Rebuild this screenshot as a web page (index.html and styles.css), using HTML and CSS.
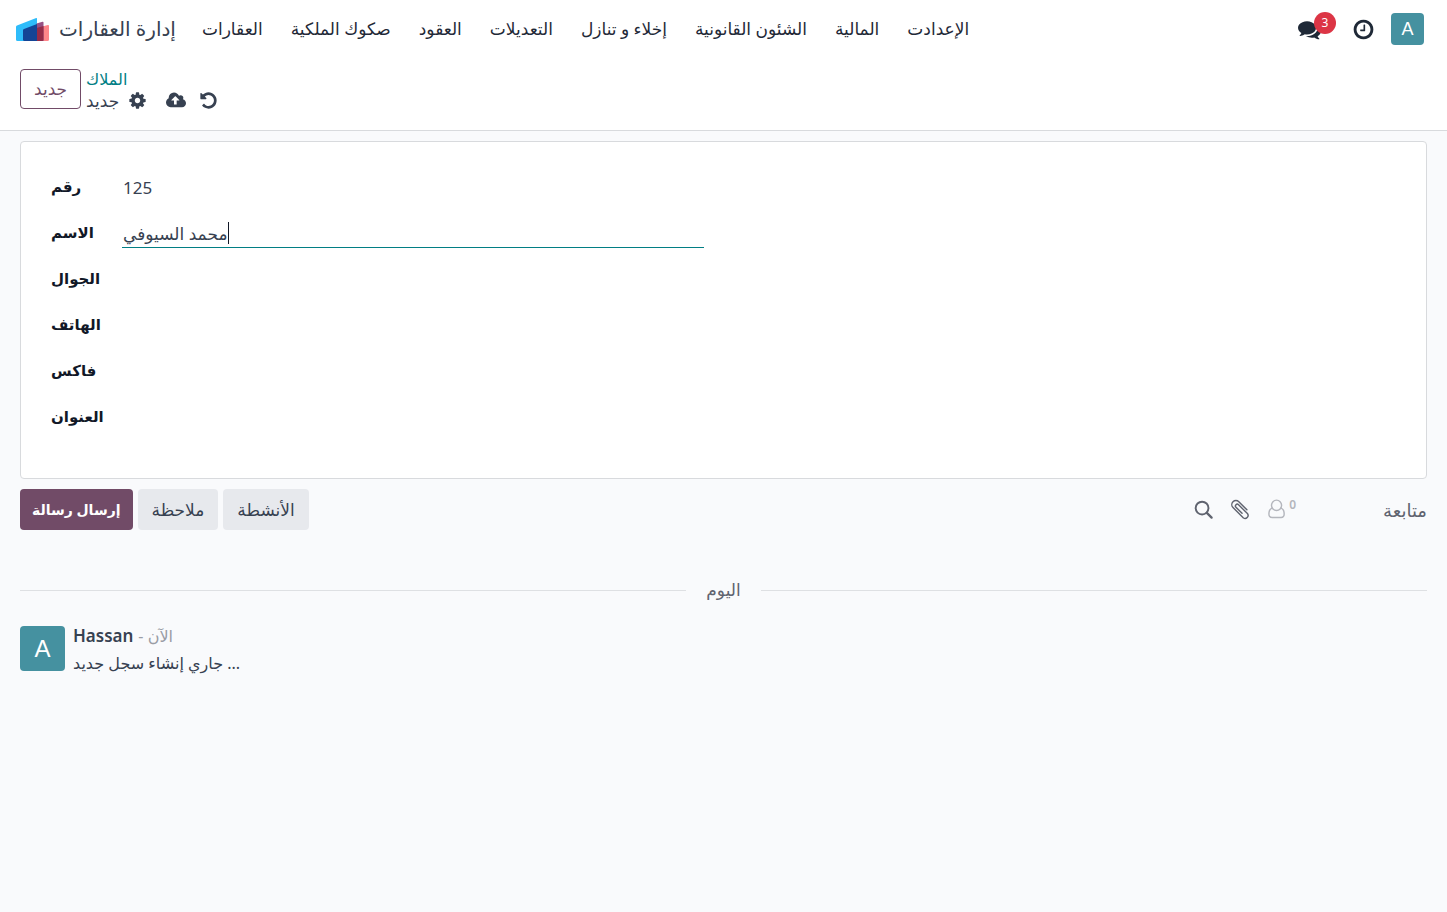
FILE: index.html
```html
<!DOCTYPE html>
<html lang="ar" dir="ltr">
<head>
<meta charset="utf-8">
<title>إدارة العقارات</title>
<link rel="stylesheet" href="styles.css">
</head>
<body>
<header class="navbar">
  <a class="brand" href="#">
    <svg class="brand-logo" viewBox="0 0 34 24" aria-hidden="true">
      <path fill="#2ebcfa" d="M2 8.500Q1 8.900 1 10V22.500Q1 24 2.500 24H22V1.500Q22 .7 21.200 1z"/>
      <path fill="#ff868a" d="M22 11L32.800 8Q34 7.700 34 8.800V22.500Q34 24 32.500 24H22z"/>
      <path fill="#985184" d="M21.500 6.500L27.500 4.800Q28.500 4.500 28.500 5.500V24H21.500z"/>
      <path fill="#962b48" d="M21.500 11L28.500 9V22.500Q28.500 24 27 24H21.500z"/>
      <path fill="#144496" d="M8 13.200Q8 12.300 9 11.900L22 7V24H9.500Q8 24 8 22.500z"/>
    </svg>
    <span>إدارة العقارات</span>
  </a>
  <nav class="menu">
    <a href="#">العقارات</a>
    <a href="#">صكوك الملكية</a>
    <a href="#">العقود</a>
    <a href="#">التعديلات</a>
    <a href="#">إخلاء و تنازل</a>
    <a href="#">الشئون القانونية</a>
    <a href="#">المالية</a>
    <a href="#">الإعدادت</a>
  </nav>
  <div class="systray">
    <button class="icon-button messages" aria-label="الرسائل">
      <svg class="icon-large" viewBox="0 0 1792 1792"><path d="M1408 768q0 139-94 257t-256.500 186.500-353.500 68.500q-86 0-176-16-124 88-278 128-36 9-86 16h-3q-11 0-20.500-8t-11.500-21q-1-3-1-6.500t.5-6.500 2-6l2.500-5 3.500-5.500 4-5 4.500-5 4-4.500q5-6 23-25t26-29.500 22.500-29 25-38.500 20.500-44q-124-72-195-177t-71-224q0-139 94-257t256.500-186.500 353.500-68.500 353.500 68.500 256.500 186.500 94 257zm384 256q0 120-71 224.500t-195 176.500q10 24 20.500 44t25 38.500 22.500 29 26 29.500 23 25q1 1 4 4.500t4.500 5 4 5 3.500 5.500l2.500 5 2 6 .5 6.500-1 6.500q-3 14-13 22t-22 7q-50-7-86-16-154-40-278-128-90 16-176 16-271 0-472-132 58 4 88 4 161 0 309-45t264-129q125-92 192-212t67-254q0-77-23-152 129 71 204 178t75 230z"/></svg>
      <span class="badge">3</span>
    </button>
    <button class="icon-button" aria-label="الأنشطة">
      <svg class="icon-large" viewBox="0 0 1792 1792"><path d="M1024 544v448q0 14-9 23t-23 9h-320q-14 0-23-9t-9-23v-64q0-14 9-23t23-9h224v-352q0-14 9-23t23-9h64q14 0 23 9t9 23zm416 352q0-148-73-273t-198-198-273-73-273 73-198 198-73 273 73 273 198 198 273 73 273-73 198-198 73-273zm224 0q0 209-103 385.500t-279.500 279.500-385.500 103-385.500-103-279.500-279.500-103-385.500 103-385.500 279.500-279.500 385.500-103 385.500 103 279.500 279.500 103 385.500z"/></svg>
    </button>
    <button class="avatar avatar-small">A</button>
  </div>
</header>

<section class="control-panel">
  <button class="button button-outline">جديد</button>
  <div class="breadcrumb">
    <a href="#">الملاك</a>
    <div class="breadcrumb-current">
      <span>جديد</span>
      <button class="icon-button" aria-label="الإجراءات">
        <svg class="icon" viewBox="0 0 1792 1792"><path d="M1152 896q0-106-75-181t-181-75-181 75-75 181 75 181 181 75 181-75 75-181zm512-109v222q0 12-8 23t-20 13l-185 28q-19 54-39 91 35 50 107 138 10 12 10 25t-9 23q-27 37-99 108t-94 71q-12 0-26-9l-138-108q-44 23-91 38-16 136-29 186-7 28-36 28h-222q-14 0-24.500-8.500t-11.500-21.500l-28-184q-49-16-90-37l-141 107q-10 9-25 9-14 0-25-11-126-114-165-168-7-10-7-23 0-12 8-23 15-21 51-66.500t54-70.500q-27-50-41-99l-183-27q-13-2-21-12.500t-8-23.500v-222q0-12 8-23t19-13l186-28q14-46 39-92-40-57-107-138-10-12-10-24 0-10 9-23 26-36 98.500-107.500t94.500-71.500q13 0 26 10l138 107q44-23 91-38 16-136 29-186 7-28 36-28h222q14 0 24.500 8.500t11.500 21.500l28 184q49 16 90 37l142-107q9-9 24-9 13 0 25 10 129 119 165 170 7 8 7 22 0 12-8 23-15 21-51 66.500t-54 70.500q26 50 41 98l183 28q13 2 21 12.500t8 23.500z"/></svg>
      </button>
      <div class="record-actions">
        <button class="icon-button" aria-label="حفظ">
          <svg class="icon icon-wide" viewBox="-64 0 1920 1792"><path d="M1216 864q0-14-9-23l-352-352q-9-9-23-9t-23 9l-351 351q-10 12-10 24 0 14 9 23t23 9h224v352q0 13 9.500 22.500t22.500 9.500h192q13 0 22.500-9.500t9.500-22.500v-352h224q13 0 22.500-9.500t9.500-22.500zm640 288q0 159-112.500 271.500t-271.500 112.500h-1088q-185 0-316.500-131.500t-131.500-316.500q0-130 70-240t188-165q-2-30-2-43 0-212 150-362t362-150q156 0 285.500 87t188.500 231q71-62 166-62 106 0 181 75t75 181q0 76-41 138 130 31 213.500 135.500t83.500 238.500z"/></svg>
        </button>
        <button class="icon-button" aria-label="تجاهل">
          <svg class="icon" viewBox="0 0 1792 1792"><path d="M1664 896q0 156-61 298t-164 245-245 164-298 61q-172 0-327-72.500t-264-204.500q-7-10-6.500-22.500t8.500-20.500l137-138q10-9 25-9 16 2 23 12 73 95 179 147t225 52q104 0 198.500-40.500t163.500-109.500 109.500-163.500 40.500-198.500-40.500-198.500-109.500-163.500-163.500-109.500-198.500-40.500q-98 0-188 35.500t-160 101.500l137 138q31 30 14 69-17 40-59 40h-448q-26 0-45-19t-19-45v-448q0-42 40-59 39-17 69 14l130 129q107-101 244.500-156.500t284.500-55.500q156 0 298 61t245 164 164 245 61 298z"/></svg>
        </button>
      </div>
    </div>
  </div>
</section>

<main class="content">
  <form class="sheet">
    <div class="group">
      <div class="field"><label for="number">رقم</label><div class="control"><input id="number" type="text" value="125"></div></div>
      <div class="field field-active"><label for="name">الاسم</label><div class="control"><input id="name" type="text" value="محمد السيوفي"><span class="caret"></span></div></div>
      <div class="field"><label for="mobile">الجوال</label><div class="control"><input id="mobile" type="text"></div></div>
      <div class="field"><label for="phone">الهاتف</label><div class="control"><input id="phone" type="text"></div></div>
      <div class="field"><label for="fax">فاكس</label><div class="control"><input id="fax" type="text"></div></div>
      <div class="field"><label for="address">العنوان</label><div class="control"><input id="address" type="text"></div></div>
    </div>
  </form>

  <div class="chatter-bar">
    <button class="button button-primary">إرسال رسالة</button>
    <button class="button button-light">ملاحظة</button>
    <button class="button button-light">الأنشطة</button>
    <div class="chatter-tools">
      <button class="icon-button" aria-label="بحث">
        <svg class="icon-tool line-icon" viewBox="0 0 22 22"><circle cx="9.500" cy="9.500" r="6.700"/><path d="M14.500 14.500L19.500 19.500" stroke-width="2.400"/></svg>
      </button>
      <button class="icon-button" aria-label="المرفقات">
        <svg class="icon-tool line-icon thin-line" viewBox="0 0 22 22"><path transform="rotate(45 11 11) translate(11 11)" d="M5 -4.500H-7A4.300 4.300 0 0 0 -7 4.100H8.500A3.200 3.200 0 0 0 8.500 -2.100H-5A1.900 1.900 0 0 0 -5 1.700H4"/></svg>
      </button>
      <button class="icon-button followers" aria-label="المتابعون">
        <svg class="icon-tool line-icon thin-line" viewBox="0 0 22 22"><ellipse cx="10" cy="6.600" rx="5.300" ry="5.400"/><path d="M5.600 9.600C3 10.200 2 12.500 2 15.800C2 18.200 3.300 19.400 5.300 19.400H14.700C16.700 19.400 18 18.200 18 15.800C18 12.500 17 10.200 14.400 9.600"/></svg>
        <sup>0</sup>
      </button>
      <button class="follow">متابعة</button>
    </div>
  </div>

  <div class="day"><span>اليوم</span></div>

  <article class="message">
    <span class="avatar avatar-large">A</span>
    <div class="message-body">
      <div class="message-head"><strong>Hassan</strong><span class="message-time">- الآن</span></div>
      <p>جاري إنشاء سجل جديد ...</p>
    </div>
  </article>
</main>
</body>
</html>
```
FILE: styles.css
```css
* { box-sizing: border-box; }
body {
  margin: 0;
  min-height: 100vh;
  background: #f9fafc;
  color: #374151;
  font-family: "Noto Sans", "DejaVu Sans", sans-serif;
  font-size: 17px;
  line-height: 26px;
}
a { color: inherit; text-decoration: none; }
button, input { font: inherit; color: inherit; }
button { cursor: pointer; }
svg { display: block; fill: currentColor; }

.navbar {
  display: flex;
  align-items: center;
  height: 58px;
  padding: 0 23px 0 15px;
  background: #fff;
  color: #1f2937;
}
.brand { display: flex; align-items: center; gap: 10px; color: #374151; font-size: 20px; }
.brand-logo { width: 34px; height: 24px; }
.menu { display: flex; gap: 28px; margin-left: 26px; white-space: nowrap; }
.systray { display: flex; align-items: center; gap: 16px; margin-left: auto; }
.icon-button { position: relative; display: flex; padding: 0; border: 0; background: none; }
.icon { width: 19px; height: 19px; }
.icon-wide { width: 20px; }
.icon-tool { width: 21px; height: 21px; }
.icon-large { width: 23px; height: 23px; }
.messages { margin-right: 15px; }
.badge {
  position: absolute;
  left: 16px;
  top: -6px;
  width: 22px;
  height: 22px;
  border-radius: 11px;
  background: #dc3545;
  color: #fff;
  font-size: 12px;
  line-height: 22px;
  text-align: center;
}
.avatar {
  flex: none;
  display: flex;
  align-items: center;
  justify-content: center;
  padding: 0;
  border: 0;
  border-radius: 4px;
  background: #4591a0;
  color: #fff;
  font-family: "Liberation Sans", sans-serif;
}
.avatar-small { width: 33px; height: 32px; font-size: 18px; }
.avatar-large { width: 45px; height: 45px; font-size: 24px; }

.control-panel {
  display: flex;
  gap: 5px;
  padding: 11px 20px 19px;
  border-bottom: 1px solid #d8dadd;
  background: #fff;
}
.button {
  height: 41px;
  padding: 0 14px;
  border: 0;
  border-radius: 4px;
  font-weight: 500;
  white-space: nowrap;
}
.button-outline { height: 40px; padding: 0 13px; border: 1px solid #714b67; background: #fff; color: #714b67; }
.button-primary { padding: 0 12px; background: #714b67; color: #fff; font-size: 14px; font-weight: 600; }
.button-light { background: #e7e9ed; }
.breadcrumb { line-height: 21px; }
.breadcrumb > a { display: block; color: #017e84; font-size: 16px; font-weight: 500; }
.breadcrumb-current { display: flex; align-items: center; gap: 9px; }
.record-actions { display: flex; gap: 13px; margin-left: 10px; }

.content { padding: 10px 20px; }
.sheet {
  padding: 23px 30px 37px;
  border: 1px solid #d8dadd;
  border-radius: 4px;
  background: #fff;
}
.group { width: 50%; padding-right: 20px; }
.field { display: grid; grid-template-columns: 71px 1fr; height: 46px; }
.field label { padding-top: 8px; color: #111827; font-size: 15px; font-weight: 600; white-space: nowrap; }
.control { position: relative; height: 37px; padding-top: 9px; }
.control input {
  display: block;
  width: 100%;
  height: 28px;
  padding: 0 1px;
  border: 0;
  border-bottom: 1px solid transparent;
  outline: 0;
  background: none;
}
.field-active input { border-bottom-color: #017e84; }
.caret { position: absolute; left: 106px; top: 11px; width: 1px; height: 22px; background: #111827; }

.chatter-bar { display: flex; gap: 5px; margin-top: 10px; }
.chatter-tools { display: flex; align-items: center; gap: 16px; margin-left: auto; color: #5f636f; }
.line-icon { fill: none; stroke: currentColor; stroke-width: 2; stroke-linecap: round; stroke-linejoin: round; }
.thin-line { stroke-width: 1.5; }
.followers { gap: 1px; color: #b4b6bd; }
.followers sup { font-size: 12px; line-height: 12px; font-weight: 600; }
.follow { margin-left: 71px; padding: 0; border: 0; background: none; font-size: 18px; font-weight: 500; }

.day { display: flex; align-items: center; gap: 20px; margin-top: 47px; color: #5f636f; font-weight: 500; }
.day::before, .day::after { content: ""; flex: 1; height: 1px; background: #dee0e3; }

.message { display: flex; gap: 8px; margin-top: 23px; }
.message-head { display: flex; gap: 5px; line-height: 20px; }
.message-head strong { font-weight: 600; }
.message-time { color: #9a9da5; font-size: 16px; }
.message-body p { margin: 4px 0 0; font-size: 16px; }
```
